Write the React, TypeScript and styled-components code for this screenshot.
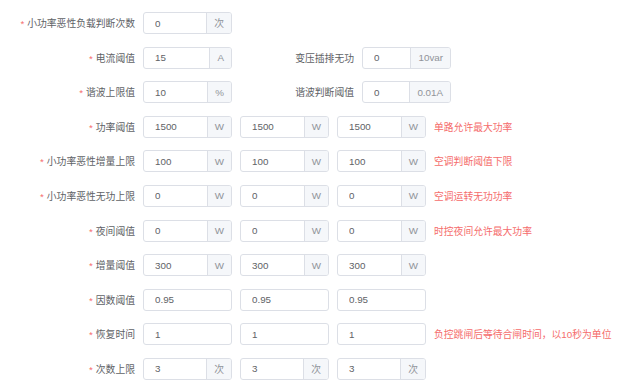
import React from 'react';
import styled, { createGlobalStyle } from 'styled-components';

const GlobalStyle = createGlobalStyle`
  html, body {
    margin: 0;
    padding: 0;
    background: #ffffff;
  }
  body {
    font-family: "Helvetica Neue", Helvetica, "Liberation Sans", "Noto Sans CJK SC", sans-serif;
  }
`;

type Field = { value: string; unit?: string };

type Row = {
  label: string;
  fields: Field[];
  hint?: string;
  extra?: { label: string; field: Field };
};

const rows: Row[] = [
  { label: '小功率恶性负载判断次数', fields: [{ value: '0', unit: '次' }] },
  {
    label: '电流阈值',
    fields: [{ value: '15', unit: 'A' }],
    extra: { label: '变压插排无功', field: { value: '0', unit: '10var' } },
  },
  {
    label: '谐波上限值',
    fields: [{ value: '10', unit: '%' }],
    extra: { label: '谐波判断阈值', field: { value: '0', unit: '0.01A' } },
  },
  {
    label: '功率阈值',
    fields: [1, 2, 3].map(() => ({ value: '1500', unit: 'W' })),
    hint: '单路允许最大功率',
  },
  {
    label: '小功率恶性增量上限',
    fields: [1, 2, 3].map(() => ({ value: '100', unit: 'W' })),
    hint: '空调判断阈值下限',
  },
  {
    label: '小功率恶性无功上限',
    fields: [1, 2, 3].map(() => ({ value: '0', unit: 'W' })),
    hint: '空调运转无功功率',
  },
  {
    label: '夜间阈值',
    fields: [1, 2, 3].map(() => ({ value: '0', unit: 'W' })),
    hint: '时控夜间允许最大功率',
  },
  {
    label: '增量阈值',
    fields: [1, 2, 3].map(() => ({ value: '300', unit: 'W' })),
  },
  {
    label: '因数阈值',
    fields: [1, 2, 3].map(() => ({ value: '0.95' })),
  },
  {
    label: '恢复时间',
    fields: [1, 2, 3].map(() => ({ value: '1' })),
    hint: '负控跳闸后等待合闸时间，以10秒为单位',
  },
  {
    label: '次数上限',
    fields: [1, 2, 3].map(() => ({ value: '3', unit: '次' })),
  },
];

function Input({ field }: { field: Field }) {
  return (
    <InputGroup>
      <InputInner readOnly value={field.value} />
      {field.unit && <Append>{field.unit}</Append>}
    </InputGroup>
  );
}

function App() {
  return (
    <>
      <GlobalStyle />
      <Form>
        {rows.map((row) => (
          <FormRow key={row.label}>
            <Label $width={143}>
              <Star>*</Star>
              {row.label}
            </Label>
            <Fields>
              {row.fields.map((f, i) => (
                <Input key={i} field={f} />
              ))}
            </Fields>
            {row.hint && <Hint>{row.hint}</Hint>}
            {row.extra && (
              <>
                <Label $width={130}>{row.extra.label}</Label>
                <Input field={row.extra.field} />
              </>
            )}
          </FormRow>
        ))}
      </Form>
    </>
  );
}

export default App;

const Form = styled.div`
  padding-top: 12px;
  display: flex;
  flex-direction: column;
  gap: 12.6px;
  font-size: 9.8px;
  color: #606266;
`;

const FormRow = styled.div`
  display: flex;
  align-items: center;
  height: 22px;
`;

const Label = styled.label<{ $width: number }>`
  width: ${(p) => p.$width}px;
  flex-shrink: 0;
  box-sizing: border-box;
  padding-right: 8px;
  text-align: right;
  color: #606266;
  white-space: nowrap;
`;

const Star = styled.span`
  color: #f56c6c;
  margin-right: 3px;
`;

const Fields = styled.div`
  display: flex;
  gap: 8px;
`;

const InputGroup = styled.div`
  display: flex;
  width: 89px;
  height: 22px;
  box-sizing: border-box;
  border: 1px solid #dcdfe6;
  border-radius: 3px;
  overflow: hidden;
  background: #fff;
`;

const InputInner = styled.input`
  flex: 1;
  min-width: 0;
  border: none;
  outline: none;
  padding: 0 0 0 11px;
  font: inherit;
  font-size: 9.8px;
  color: #606266;
  background: transparent;
`;

const Append = styled.div`
  display: flex;
  align-items: center;
  padding: 0 7px;
  background: #f5f7fa;
  color: #909399;
  border-left: 1px solid #dcdfe6;
  white-space: nowrap;
`;

const Hint = styled.span`
  margin-left: 8px;
  color: #f56c6c;
  white-space: nowrap;
`;
